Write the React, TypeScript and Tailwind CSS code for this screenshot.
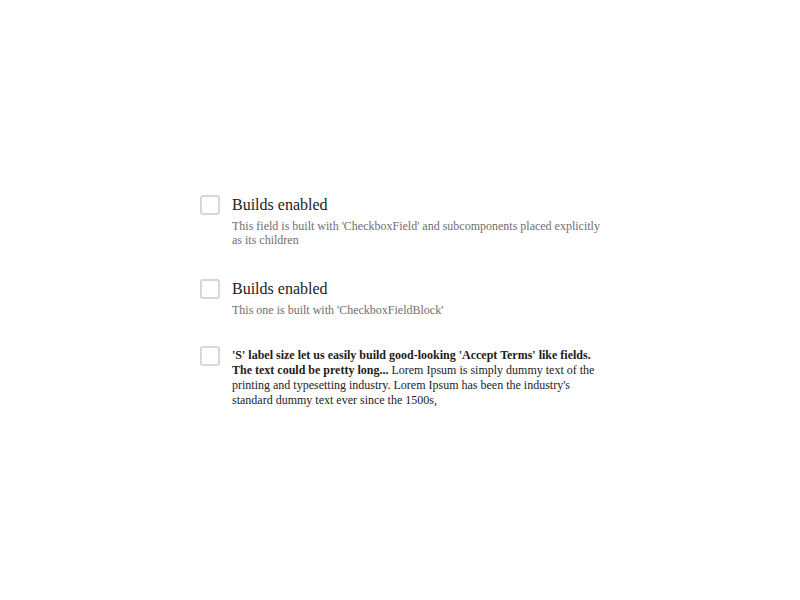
// Checkbox field demo
interface FieldProps {
    label?: string;
    description?: string;
    children?: React.ReactNode;
    className?: string;
}

function Box() {
    return <div className="w-5 h-5 shrink-0 rounded-[3px] border-2 border-[#d6d6de] bg-white"></div>;
}

function CheckboxField({ label, description, className }: FieldProps) {
    return (
        <div className={`flex gap-3 ${className ?? ''}`}>
            <Box />
            <div className="flex flex-col">
                <span className="text-[16px] leading-5 text-[#1c1c1c]">{label}</span>
                <span className="mt-[4px] text-[12px] leading-[14px] text-[#6f6f6f]">{description}</span>
            </div>
        </div>
    );
}

export default function App() {
    return (
        <div className="min-h-screen w-full bg-white flex justify-center items-start pt-[195px]" style={{ fontFamily: '"Liberation Serif", serif' }}>
            <div className="w-[400px] flex flex-col">
                <CheckboxField
                    label="Builds enabled"
                    description="This field is built with 'CheckboxField' and subcomponents placed explicitly as its children"
                />
                <CheckboxField
                    className="mt-[32px]"
                    label="Builds enabled"
                    description="This one is built with 'CheckboxFieldBlock'"
                />
                <div className="flex gap-3 mt-[29px]">
                    <Box />
                    <p className="pt-[2px] text-[12px] leading-[15px] text-[#1c1c1c]">
                        <b>'S' label size let us easily build good-looking 'Accept Terms' like fields. The text could be pretty long...</b>{' '}
                        Lorem Ipsum is simply dummy text of the printing and typesetting industry. Lorem Ipsum has been the industry's standard dummy text ever since the 1500s,
                    </p>
                </div>
            </div>
        </div>
    );
}
